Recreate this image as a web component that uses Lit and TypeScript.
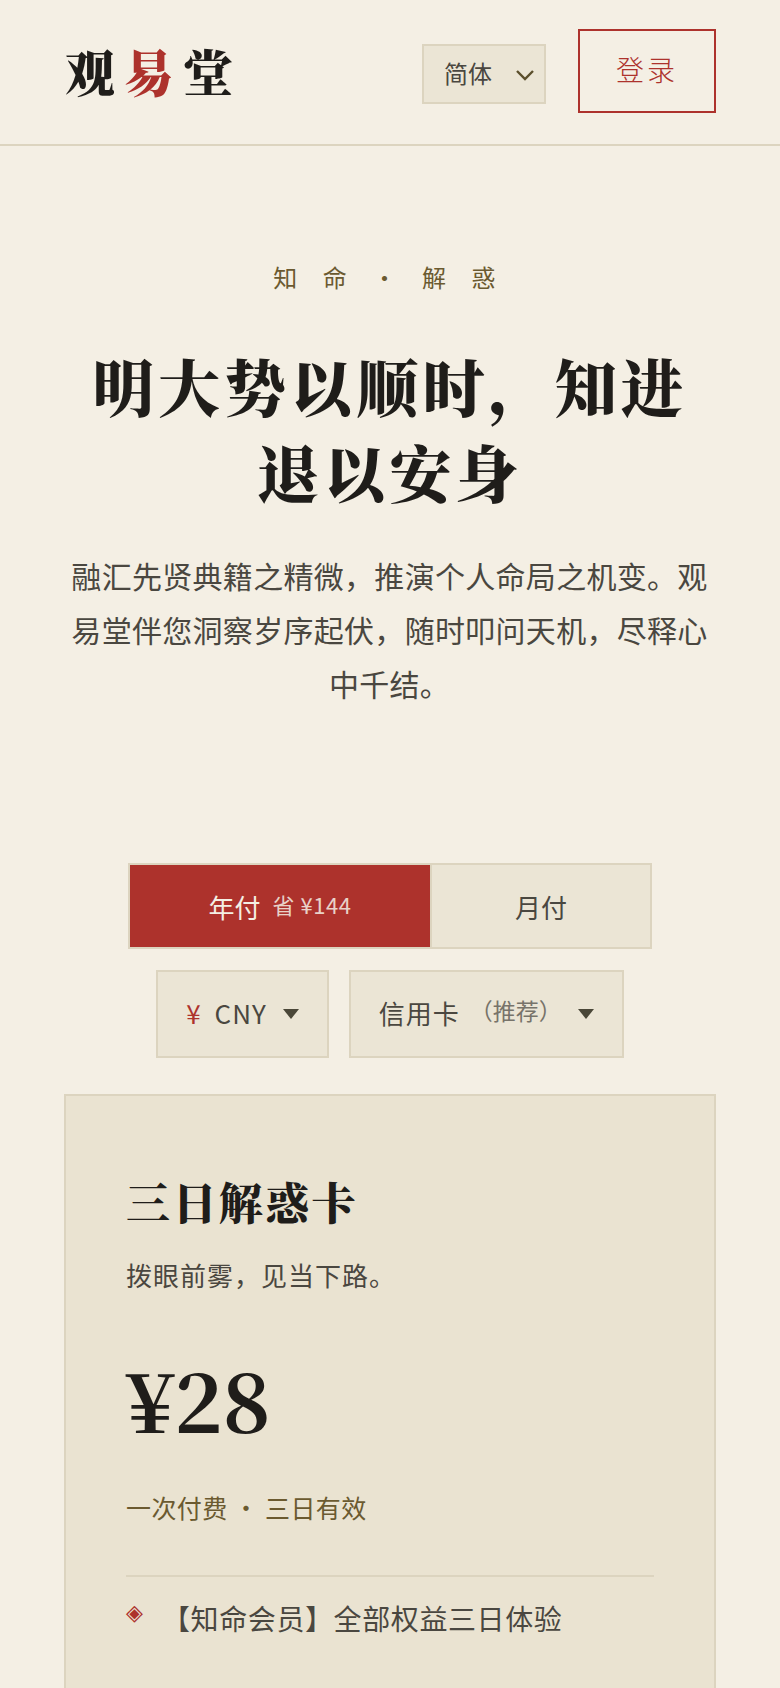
import { LitElement, css, html } from 'lit';
import { customElement } from 'lit/decorators.js';

@customElement('app-root')
export class AppRoot extends LitElement {
  static styles = css`
    :host {
      display: block;
      height: 1688px;
      overflow: hidden;
      background: #f4efe4;
      color: #1f1d1a;
      font-family: 'Noto Sans CJK SC', 'Noto Sans', sans-serif;
      --serif: 'Noto Serif CJK SC', 'Liberation Serif', 'Noto Sans CJK SC', serif;
      --red: #ad322c;
      --line: #dcd4bf;
      --panel: #ebe5d5;
    }
    * { box-sizing: border-box; }

    header {
      display: flex;
      align-items: center;
      justify-content: space-between;
      height: 146px;
      padding: 0 64px 2px 65px;
      border-bottom: 2px solid var(--line);
    }
    .logo {
      font-family: var(--serif);
      font-size: 50px;
      font-weight: 900;
      letter-spacing: 9px;
      margin-top: -3px;
    }
    .logo span { color: var(--red); }
    .actions { display: flex; align-items: center; gap: 32px; }
    .lang {
      display: flex;
      align-items: center;
      justify-content: space-between;
      width: 124px;
      height: 60px;
      margin-top: 6px;
      padding: 0 9px 4px 20px;
      background: var(--panel);
      border: 2px solid var(--line);
      font-size: 24px;
      color: #4a4740;
    }
    .lang svg { margin-top: 6px; }
    .login {
      width: 138px;
      height: 84px;
      padding: 0 36px 4px;
      display: flex;
      align-items: center;
      border: 2px solid var(--red);
      color: var(--red);
      font-size: 28px;
      font-weight: 300;
      letter-spacing: 3px;
      white-space: nowrap;
    }

    .hero { padding: 113px 65px 0 64px; text-align: center; }
    .eyebrow {
      font-size: 24px;
      line-height: 36px;
      letter-spacing: 10.1px;
      color: #6b5a30;
    }
    h1 {
      margin: 48px 0 0;
      font-family: var(--serif);
      font-size: 62px;
      line-height: 86px;
      letter-spacing: 4.1px;
      font-weight: 900;
    }
    .lead {
      margin: 33px 0 0;
      font-size: 30px;
      line-height: 54px;
      letter-spacing: 0.3px;
      color: #4a4740;
    }

    .controls {
      display: flex;
      flex-direction: column;
      align-items: center;
      gap: 21px;
      margin-top: 153px;
    }
    .toggle {
      display: flex;
      width: 524px;
      height: 86px;
      border: 2px solid var(--line);
      background: var(--panel);
    }
    .toggle > div {
      display: flex;
      align-items: center;
      justify-content: center;
      font-size: 26px;
      color: #4a4740;
    }
    .toggle .on { width: 300px; background: var(--red); color: #f4efe4; gap: 12px; }
    .toggle .on small { font-size: 22px; letter-spacing: 0.5px; opacity: 0.85; margin-top: -4px; }
    .toggle .off { flex: 1; border-left: 2px solid var(--line); }
    .pickers { display: flex; gap: 20px; }
    .picker {
      display: flex;
      align-items: center;
      height: 88px;
      padding: 0 28px 4px;
      background: var(--panel);
      border: 2px solid var(--line);
      font-size: 26px;
      letter-spacing: 1px;
      color: #4a4740;
    }
    .picker .sym { color: var(--red); margin-right: 13px; }
    .picker .note { font-size: 23px; letter-spacing: 0; color: #77736a; margin: -4px 0 0 10px; }
    .tri {
      width: 0;
      height: 0;
      margin: 4px 0 0 16px;
      border-left: 8px solid transparent;
      border-right: 8px solid transparent;
      border-top: 10px solid #4a4738;
    }

    .card {
      margin: 36px 64px 0;
      height: 800px;
      padding: 74px 60px 0;
      background: #eae3d1;
      border: 2px solid var(--line);
    }
    h2 {
      margin: 0;
      font-family: var(--serif);
      font-size: 44px;
      line-height: 62px;
      letter-spacing: 2.4px;
      font-weight: 900;
    }
    .tag { margin: 23px 0 0; font-size: 26px; line-height: 40px; letter-spacing: 1px; color: #4a4740; }
    .price {
      margin-top: 48px;
      font-family: var(--serif);
      font-size: 82px;
      line-height: 110px;
      font-weight: 700;
    }
    .term { margin-top: 34px; font-size: 25px; line-height: 40px; letter-spacing: 0.4px; color: #6b5a30; }
    .rule { height: 2px; background: var(--line); margin-top: 48px; }
    .item {
      display: flex;
      margin-top: 19px;
      font-size: 28px;
      line-height: 44px;
      letter-spacing: 0.6px;
      color: #4a4740;
    }
    .item i { width: 36px; font-style: normal; font-size: 22px; line-height: 28px; color: var(--red); }
  `;

  render() {
    return html`
      <header>
        <div class="logo">观<span>易</span>堂</div>
        <div class="actions">
          <div class="lang">
            简体
            <svg width="20" height="12" viewBox="0 0 20 12" fill="none" stroke="#5b4f2c" stroke-width="2.4"><path d="M2 2l8 8 8-8" /></svg>
          </div>
          <div class="login">登录</div>
        </div>
      </header>
      <section class="hero">
        <div class="eyebrow">知 命 · 解 惑</div>
        <h1>明大势以顺时，知进退以安身</h1>
        <p class="lead">融汇先贤典籍之精微，推演个人命局之机变。观易堂伴您洞察岁序起伏，随时叩问天机，尽释心中千结。</p>
      </section>
      <section class="controls">
        <div class="toggle">
          <div class="on">年付 <small>省 ¥144</small></div>
          <div class="off">月付</div>
        </div>
        <div class="pickers">
          <div class="picker"><span class="sym">¥</span><span>CNY</span><span class="tri"></span></div>
          <div class="picker">信用卡<span class="note">（推荐）</span><span class="tri"></span></div>
        </div>
      </section>
      <section class="card">
        <h2>三日解惑卡</h2>
        <p class="tag">拨眼前雾，见当下路。</p>
        <div class="price">¥28</div>
        <div class="term">一次付费 · 三日有效</div>
        <div class="rule"></div>
        <div class="item"><i>◈</i>【知命会员】全部权益三日体验</div>
      </section>
    `;
  }
}
